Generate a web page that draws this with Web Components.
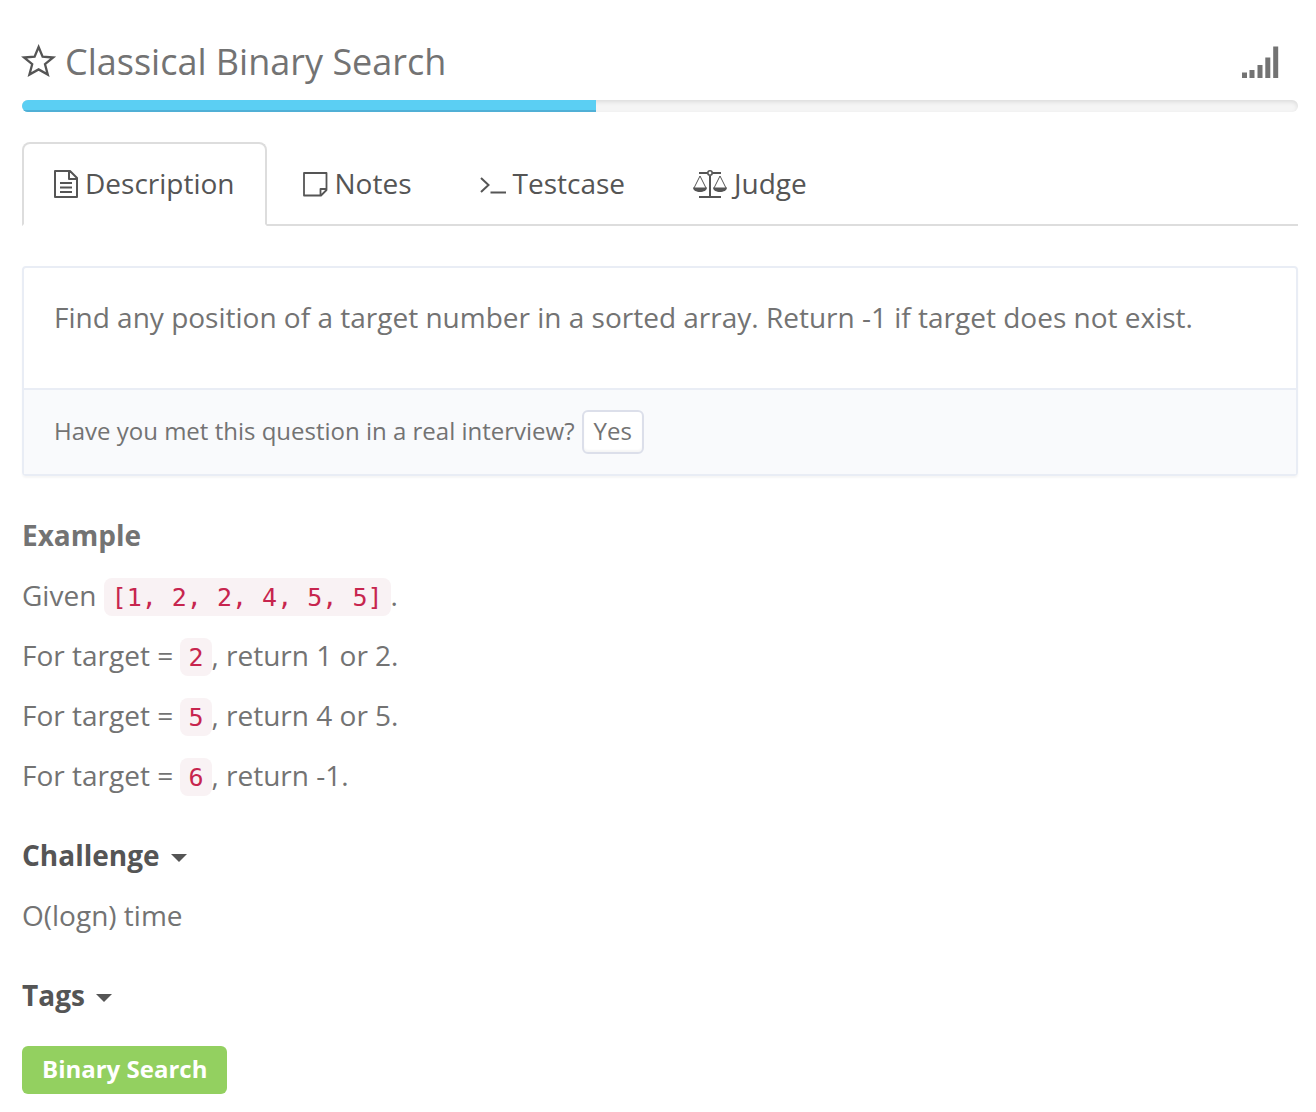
<!DOCTYPE html>
<html lang="en">
<head>
<meta charset="utf-8">
<title>Classical Binary Search</title>
<style>
  body { margin: 0; background: #fff; color: #737373; font: 28px/38px "Open Sans", sans-serif; }
</style>
</head>
<body>
<problem-page></problem-page>

<script>
const define = (name, html) => {
  const template = document.createElement('template');
  template.innerHTML = html;
  customElements.define(name, class extends HTMLElement {
    constructor() {
      super();
      this.attachShadow({ mode: 'open' }).append(template.content.cloneNode(true));
    }
  });
};

const icons = {
  star: [34, 34, '<path d="M16.600 2 20.600 11.700 31.200 12.500 23 19.200 25.800 29.600 16.600 24.400 7.400 29.600 10.200 19.200 2 12.500 12.600 11.700Z" fill="none" stroke="currentColor" stroke-width="2.3"/>'],
  signal: [36, 34, '<path d="M0 27.5h5V33H0zM7.500 25h5v8h-5zM15.500 20h5v13h-5zM23.300 12.500h5V33h-5zM31.200 1.500h5V33h-5z" fill="currentColor"/>'],
  file: [24, 28, '<path d="M1 1h15l7 7v19H1zM15 1v8h8M6 13h12M6 17.500h12M6 22h12" fill="none" stroke="currentColor" stroke-width="2" stroke-linejoin="round"/>'],
  note: [25, 26, '<path d="M1 2h22.500v17l-5.500 5.500H1zM17.500 24v-6h6" fill="none" stroke="currentColor" stroke-width="1.800" stroke-linejoin="round"/>'],
  prompt: [26, 26, '<path d="m1 7 7.500 7L1 21M10.500 21.500H26" fill="none" stroke="currentColor" stroke-width="2"/>'],
  scales: [34, 30, '<path d="M6 4h8.500M19.500 4H28M17 7v21M6 28h22" fill="none" stroke="currentColor" stroke-width="2"/><circle cx="17" cy="4" r="2.200" fill="none" stroke="currentColor" stroke-width="1.600"/><path d="M1 19 7 7l6 12M21 19l6-12 6 12" fill="none" stroke="currentColor" stroke-width="1"/><path d="M0 18.500h14c0 6-14 6-14 0zM20 18.500h14c0 6-14 6-14 0z" fill="currentColor"/>'],
  caret: [16, 8, '<path d="M0 0h16L8 8z" fill="currentColor"/>']
};

customElements.define('ui-icon', class extends HTMLElement {
  constructor() {
    super();
    this.attachShadow({ mode: 'open' });
  }
  connectedCallback() {
    const [w, h, art] = icons[this.getAttribute('name')];
    this.shadowRoot.innerHTML = `<style>:host{display:inline-block;flex:none}svg{display:block;overflow:visible}</style>
      <svg width="${w}" height="${h}" viewBox="0 0 ${w} ${h}" aria-hidden="true">${art}</svg>`;
  }
});

define('problem-header', `
  <style>
    :host { display: flex; align-items: center; gap: 9px; padding: 22px 0 18px; }
    h1 { margin: 0; flex: 1; font-size: 36px; line-height: 40px; font-weight: 400; }
    button { display: flex; padding: 0; border: 0; background: none; color: #555; }
    .level { margin-right: 20px; }
  </style>
  <button type="button" aria-label="Favorite"><ui-icon name="star"></ui-icon></button>
  <h1><slot></slot></h1>
  <ui-icon class="level" name="signal"></ui-icon>`);

define('progress-line', `
  <style>
    :host { display: block; height: 12px; border-radius: 6px; overflow: hidden; background: #f5f5f5; box-shadow: inset 0 2px 4px rgba(0,0,0,.1); }
    div { width: 45%; height: 100%; background: #5bcff3; box-shadow: inset 0 -2px 0 #50b0d6; }
  </style>
  <div role="progressbar" aria-label="Progress" aria-valuemin="0" aria-valuemax="100" aria-valuenow="45"></div>`);

define('tab-bar', `
  <style>
    :host { display: block; }
    nav { display: flex; gap: 4px; border-bottom: 2px solid #ddd; }
  </style>
  <nav aria-label="Problem sections"><slot></slot></nav>`);

define('tab-link', `
  <style>
    :host { display: block; margin-bottom: -2px; }
    a { display: flex; align-items: center; gap: 7px; padding: 20px 30px; border: 2px solid transparent; border-radius: 8px 8px 0 0; color: #555; text-decoration: none; }
    span { padding-bottom: 2px; }
    :host([active]) a { border-color: #ddd #ddd #fff; background: #fff; }
  </style>
  <a href="#"><slot name="icon"></slot><span><slot></slot></span></a>`);

define('question-panel', `
  <style>
    :host { display: block; border: 2px solid #e9edf5; border-radius: 4px; box-shadow: 0 2px 2px rgba(0,0,0,.04); }
    .body { padding: 30px 30px 52px; }
    .foot { display: flex; align-items: baseline; gap: 7px; padding: 20px 30px; border-top: 2px solid #e9edf5; background: #f9fafc; font-size: 24px; }
  </style>
  <div class="body"><slot></slot></div>
  <div class="foot"><slot name="footer"></slot></div>`);

define('small-button', `
  <style>
    :host { display: block; }
    button { display: block; padding: 0 10px 2px; border: 2px solid #dcdfea; border-radius: 6px; background: #fff; box-shadow: inset 0 -2px 2px rgba(0,0,0,.04); color: inherit; font: 24px/38px "Open Sans", sans-serif; }
  </style>
  <button type="button"><slot></slot></button>`);

define('code-chip', `
  <style>
    :host { display: inline; }
    code { padding: 5px 8px 4px; border-radius: 8px; background: #f9f2f4; color: #c7254e; font: 25px/30px "DejaVu Sans Mono", monospace; }
  </style>
  <code><slot></slot></code>`);

define('text-section', `
  <style>
    :host { display: flex; flex-direction: column; gap: 22px; padding-bottom: 2px; }
    h2 { margin: 0; font-size: 28px; line-height: 38px; font-weight: 700; }
    ::slotted(p) { margin: 0; }
  </style>
  <h2><slot name="title"></slot></h2>
  <slot></slot>`);

define('fold-toggle', `
  <style>
    button { display: flex; align-items: center; gap: 11px; padding: 0; border: 0; background: none; color: #555; font: inherit; }
    ui-icon { padding-top: 6px; }
  </style>
  <button type="button" aria-expanded="true"><slot></slot><ui-icon name="caret"></ui-icon></button>`);

define('tag-badge', `
  <style>
    :host { display: flex; padding-top: 10px; }
    a { padding: 4px 20px 6px; border-radius: 6px; background: #93d060; color: #fff; font-size: 24px; font-weight: 700; text-decoration: none; }
  </style>
  <a href="#"><slot></slot></a>`);

define('problem-page', `
  <style>
    :host { display: block; padding: 20px 18px 16px 22px; }
    tab-bar { margin-top: 30px; }
    question-panel, text-section { margin-top: 40px; }
    p { margin: 0; }
  </style>
  <problem-header>Classical Binary Search</problem-header>
  <progress-line></progress-line>
  <tab-bar>
    <tab-link active><ui-icon slot="icon" name="file"></ui-icon>Description</tab-link>
    <tab-link><ui-icon slot="icon" name="note"></ui-icon>Notes</tab-link>
    <tab-link><ui-icon slot="icon" name="prompt"></ui-icon>Testcase</tab-link>
    <tab-link><ui-icon slot="icon" name="scales"></ui-icon>Judge</tab-link>
  </tab-bar>
  <question-panel>
    <p>Find any position of a target number in a sorted array. Return -1 if target does not exist.</p>
    <span slot="footer">Have you met this question in a real interview?</span>
    <small-button slot="footer">Yes</small-button>
  </question-panel>
  <text-section>
    <span slot="title">Example</span>
    <p>Given <code-chip>[1, 2, 2, 4, 5, 5]</code-chip>.</p>
    <p>For target = <code-chip>2</code-chip>, return 1 or 2.</p>
    <p>For target = <code-chip>5</code-chip>, return 4 or 5.</p>
    <p>For target = <code-chip>6</code-chip>, return -1.</p>
  </text-section>
  <text-section>
    <fold-toggle slot="title">Challenge</fold-toggle>
    <p>O(logn) time</p>
  </text-section>
  <text-section>
    <fold-toggle slot="title">Tags</fold-toggle>
    <tag-badge>Binary Search</tag-badge>
  </text-section>`);
</script>
</body>
</html>
